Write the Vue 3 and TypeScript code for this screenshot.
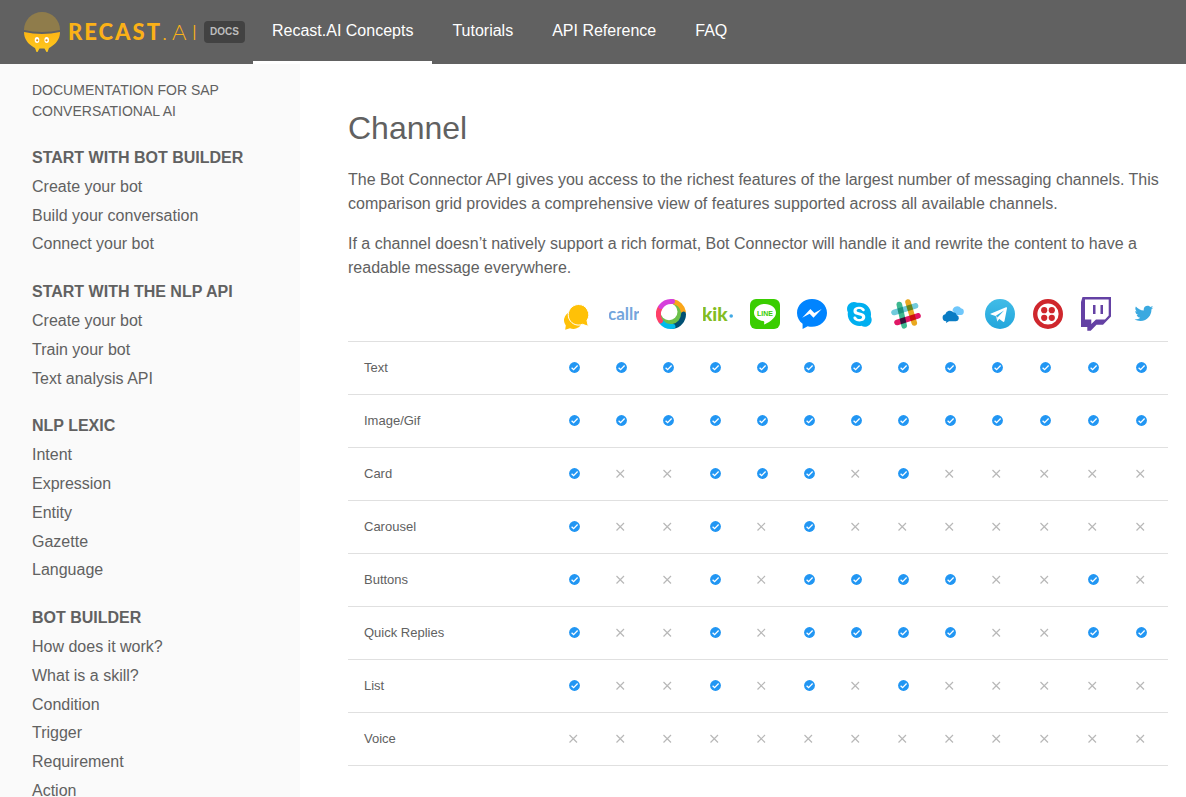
<script setup lang="ts">
interface Group {
  title: string
  items: string[]
}

interface Feature {
  name: string
  support: string
}

const tabs: string[] = ['Recast.AI Concepts', 'Tutorials', 'API Reference', 'FAQ']

const groups: Group[] = [
  { title: 'START WITH BOT BUILDER', items: ['Create your bot', 'Build your conversation', 'Connect your bot'] },
  { title: 'START WITH THE NLP API', items: ['Create your bot', 'Train your bot', 'Text analysis API'] },
  { title: 'NLP LEXIC', items: ['Intent', 'Expression', 'Entity', 'Gazette', 'Language'] },
  {
    title: 'BOT BUILDER',
    items: ['How does it work?', 'What is a skill?', 'Condition', 'Trigger', 'Requirement', 'Action'],
  },
]

// One character per channel: 1 = supported, 0 = not supported
const features: Feature[] = [
  { name: 'Text', support: '1111111111111' },
  { name: 'Image/Gif', support: '1111111111111' },
  { name: 'Card', support: '1001110100000' },
  { name: 'Carousel', support: '1001010000000' },
  { name: 'Buttons', support: '1001011110010' },
  { name: 'Quick Replies', support: '1001011110011' },
  { name: 'List', support: '1001010100000' },
  { name: 'Voice', support: '0000000000000' },
]
</script>

<template>
  <div class="page">
    <header class="topbar">
      <a class="brand" href="#">
        <svg class="robot" viewBox="0 0 36 40" aria-hidden="true">
          <defs>
            <linearGradient id="face" x1="0" y1="0" x2="0" y2="1">
              <stop offset="0" stop-color="#fcb514" />
              <stop offset="1" stop-color="#ffc91f" />
            </linearGradient>
          </defs>
          <path d="M0 18C0 8 8 0 18 0S36 8 36 18Q28 20 18 20T0 18Z" fill="#8f7c4b" />
          <path d="M0 20Q9 22 18 22T36 20C36 27 32 32 26 35.500L25 36L23.500 40H22.500L20.500 36.500H15.500L13.500 40H12.500L11 36L10 35.500C4 32 0 27 0 20Z" fill="url(#face)" />
          <ellipse cx="13" cy="28" rx="2.300" ry="3" fill="#fff" />
          <ellipse cx="22.700" cy="28" rx="2.300" ry="3" fill="#fff" />
          <circle cx="13.200" cy="28.300" r="1.100" fill="#d98a18" />
          <circle cx="22.500" cy="28.300" r="1.100" fill="#d98a18" />
        </svg>
        <span class="wordmark">RECAST<span class="thin">.AI</span></span>
        <span class="badge">DOCS</span>
      </a>
      <nav class="tabs">
        <a v-for="(tab, i) in tabs" :key="tab" href="#" :class="['tab', { active: i === 0 }]">{{ tab }}</a>
      </nav>
    </header>

    <div class="body">
      <aside class="sidebar">
        <p class="intro">DOCUMENTATION FOR SAP CONVERSATIONAL AI</p>
        <section v-for="group in groups" :key="group.title" class="group">
          <h2>{{ group.title }}</h2>
          <ul>
            <li v-for="item in group.items" :key="item"><a href="#">{{ item }}</a></li>
          </ul>
        </section>
      </aside>

      <main class="content">
        <h1>Channel</h1>
        <p>
          The Bot Connector API gives you access to the richest features of the largest number of messaging
          channels. This comparison grid provides a comprehensive view of features supported across all available
          channels.
        </p>
        <p>
          If a channel doesn’t natively support a rich format, Bot Connector will handle it and rewrite the content
          to have a readable message everywhere.
        </p>

        <table>
          <colgroup>
            <col />
            <col class="channel" span="9" />
            <col class="channel wide" span="3" />
            <col class="channel" />
          </colgroup>
          <thead>
            <tr>
              <td></td>
              <th scope="col">
                <svg viewBox="0 0 30 36" role="img" aria-label="Webchat">
                  <path d="M11 15.500A8.800 8.800 0 0 0 3.800 29.500L3.200 33.800L8 32.200A9 8.800 0 0 0 19.500 28Z" fill="#ffc107" />
                  <path d="M16.300 8.500A10.300 10.300 0 0 1 25 24.500L26.300 30.300L20.500 28.300A10.300 10.300 0 1 1 16.300 8.500Z" fill="#ffc107" stroke="#fff" stroke-width="1" />
                </svg>
              </th>
              <th scope="col">
                <svg viewBox="0 0 30 36" role="img" aria-label="Callr">
                  <text x="-1" y="24" class="callr">callr</text>
                </svg>
              </th>
              <th scope="col">
                <svg viewBox="0 0 30 36" role="img" aria-label="Webex Teams">
                  <circle cx="15" cy="18" r="11" fill="#6cc04a" />
                  <circle cx="13" cy="15.800" r="8.500" fill="#fff" />
                  <g fill="none" stroke-width="5" stroke-linecap="round">
                    <path d="M17 5.600A12.500 12.500 0 0 1 27.300 15.500" stroke="#faa61a" />
                    <path d="M27.500 18A12.500 12.500 0 0 1 17 30.400" stroke="#005073" />
                    <path d="M17 30.400A12.500 12.500 0 0 1 5.500 26.200" stroke="#00bceb" />
                    <path d="M4.500 24.800A12.500 12.500 0 0 1 4 12" stroke="#ff4068" />
                    <path d="M5 10.500A12.500 12.500 0 0 1 16.500 5.500" stroke="#d63fdb" />
                  </g>
                </svg>
              </th>
              <th scope="col">
                <svg viewBox="0 0 30 36" role="img" aria-label="Kik">
                  <text x="-1" y="25" class="kik">kik</text>
                  <circle cx="28.200" cy="20" r="1.800" fill="#42a9e4" />
                </svg>
              </th>
              <th scope="col">
                <svg viewBox="0 0 30 36" role="img" aria-label="Line">
                  <rect y="3" width="30" height="30" rx="6" fill="#3acd01" />
                  <path d="M15 8C9 8 4 11.800 4 16.700C4 21 8 24.400 13.200 25C14.600 25.300 14.300 26.300 14 28.500C17 27.500 26 22.500 26 16.700C26 11.800 21 8 15 8Z" fill="#fff" />
                  <text x="15" y="19.500" text-anchor="middle" class="line">LINE</text>
                </svg>
              </th>
              <th scope="col">
                <svg viewBox="0 0 30 36" role="img" aria-label="Messenger">
                  <path transform="translate(0 3) scale(1.250)" fill="#0084ff" d="M12 0C5.373 0 0 4.974 0 11.111c0 3.498 1.744 6.614 4.469 8.654V24l4.088-2.242c1.092.3 2.246.464 3.443.464 6.627 0 12-4.975 12-11.110S18.627 0 12 0zm1.191 14.963l-3.055-3.260-5.963 3.260L10.732 8l3.131 3.259L19.752 8l-6.561 6.963z" />
                </svg>
              </th>
              <th scope="col">
                <svg viewBox="0 0 30 36" role="img" aria-label="Skype">
                  <path transform="translate(3 6) scale(1.030)" fill="#00aff0" d="M12.069 18.874c-4.023 0-5.820-1.979-5.820-3.464 0-.765.561-1.296 1.333-1.296 1.723 0 1.273 2.477 4.487 2.477 1.641 0 2.550-.895 2.550-1.811 0-.551-.269-1.160-1.354-1.429l-3.576-.895c-2.880-.724-3.403-2.286-3.403-3.751 0-3.047 2.861-4.191 5.549-4.191 2.471 0 5.393 1.373 5.393 3.199 0 .784-.688 1.240-1.453 1.240-1.469 0-1.198-2.037-4.164-2.037-1.469 0-2.292.664-2.292 1.617s1.153 1.258 2.157 1.487l2.637.587c2.891.649 3.624 2.346 3.624 3.944 0 2.476-1.902 4.324-5.722 4.324M23.320 12.007c0-1.529-.301-3.012-.898-4.420-.569-1.348-1.395-2.562-2.427-3.596-1.049-1.033-2.247-1.856-3.595-2.426-1.318-.631-2.801-.930-4.328-.930-.720 0-1.444.070-2.143.204C8.910.274 7.829 0 6.731 0c-1.789 0-3.470.698-4.736 1.967C.729 3.235.032 4.923.032 6.716c0 1.143.292 2.265.844 3.258-.114.645-.172 1.299-.172 1.955 0 1.530.300 3.017.884 4.416.568 1.362 1.378 2.576 2.427 3.609 1.034 1.050 2.247 1.857 3.595 2.442 1.394.600 2.877.898 4.404.898.659 0 1.334-.060 1.977-.179 1.002.569 2.126.871 3.294.871 1.783 0 3.459-.690 4.733-1.963 1.259-1.259 1.962-2.951 1.962-4.749 0-1.138-.299-2.262-.853-3.266.120-.675.193-1.332.193-2.001z" fill-rule="evenodd" />
                </svg>
              </th>
              <th scope="col">
                <svg viewBox="0 0 30 36" role="img" aria-label="Slack" class="slack">
                  <g fill="none" stroke-width="5.600" stroke-linecap="round">
                    <path d="M8.300 8.500L13.200 29.800" stroke="#3eb890" />
                    <path d="M17 6L23.300 27" stroke="#e9a820" />
                    <path class="over" d="M3 16.500L24.500 9.800" stroke="#70cadb" />
                    <path class="over" d="M6 26.500L27 19.800" stroke="#e01765" />
                  </g>
                </svg>
              </th>
              <th scope="col">
                <svg viewBox="0 0 30 36" role="img" aria-label="SAP Cloud">
                  <path d="M14.500 14.500A4.700 4.700 0 0 1 23 12.300A3.400 3.400 0 0 1 23 19H18Z" fill="#6fc7fb" />
                  <path d="M8.300 25.200A3.500 3.500 0 0 1 7.300 18.300A4.800 4.800 0 0 1 15.500 16.300A3.600 3.600 0 0 1 18.700 19A3.200 3.200 0 0 1 18 25.200H11L8 27Z" fill="#0a7cc4" />
                </svg>
              </th>
              <th scope="col">
                <svg viewBox="0 0 30 36" role="img" aria-label="Telegram">
                  <defs>
                    <linearGradient id="tg" x1="0" y1="0" x2="0" y2="1">
                      <stop offset="0" stop-color="#41bce7" />
                      <stop offset="1" stop-color="#22a6dc" />
                    </linearGradient>
                  </defs>
                  <circle cx="15" cy="18" r="15" fill="url(#tg)" />
                  <path d="M10.500 19.500L12.300 25.500L14.500 22.500Z" fill="#c3dcea" />
                  <path d="M5.500 17.800L21 11.200Q22.300 10.900 22 12.300L19.500 25Q19 26.500 17.700 25.600L14 22.800L12.300 25.500L12.500 21.500L19 14.500L10.500 20L6 18.500Q4.900 18.100 5.500 17.800Z" fill="#fff" />
                </svg>
              </th>
              <th scope="col">
                <svg viewBox="0 0 30 36" role="img" aria-label="Twilio">
                  <circle cx="15" cy="18" r="12.800" fill="#fff" stroke="#cf272d" stroke-width="4.400" />
                  <g fill="#cf272d">
                    <circle cx="11.200" cy="14.200" r="3.100" />
                    <circle cx="18.800" cy="14.200" r="3.100" />
                    <circle cx="11.200" cy="21.800" r="3.100" />
                    <circle cx="18.800" cy="21.800" r="3.100" />
                  </g>
                </svg>
              </th>
              <th scope="col">
                <svg viewBox="0 0 30 36" role="img" aria-label="Twitch">
                  <path d="M1.500 1H30V20.500L22 28.700H15.500L9.700 34.700H6.300V31H0V6Z" fill="#6441a4" />
                  <path d="M4 3.500H27.700V19.500L24 23.500H15L10.300 28V23.500H4Z" fill="#fff" />
                  <path d="M12 9H14.500V18H12ZM19.500 9H22V18H19.500Z" fill="#6441a4" />
                </svg>
              </th>
              <th scope="col">
                <svg viewBox="0 0 30 36" role="img" aria-label="Twitter">
                  <path transform="translate(5.600 8) scale(.780)" fill="#3aa9e0" d="M23.954 4.569c-.885.389-1.830.654-2.825.775 1.014-.611 1.794-1.574 2.163-2.723-.951.555-2.005.959-3.127 1.184-.896-.959-2.173-1.559-3.591-1.559-2.717 0-4.920 2.203-4.920 4.917 0 .390.045.765.127 1.124C7.691 8.094 4.066 6.130 1.640 3.161c-.427.722-.666 1.561-.666 2.475 0 1.710.870 3.213 2.188 4.096-.807-.026-1.566-.248-2.228-.616v.061c0 2.385 1.693 4.374 3.946 4.827-.413.111-.849.171-1.296.171-.314 0-.615-.030-.916-.086.631 1.953 2.445 3.377 4.604 3.417-1.680 1.319-3.809 2.105-6.102 2.105-.390 0-.779-.023-1.170-.067 2.189 1.394 4.768 2.209 7.557 2.209 9.054 0 13.999-7.496 13.999-13.986 0-.209 0-.420-.015-.630.961-.689 1.800-1.560 2.460-2.548l-.047-.020z" />
                </svg>
              </th>
            </tr>
          </thead>
          <tbody>
            <tr v-for="feature in features" :key="feature.name">
              <th scope="row">{{ feature.name }}</th>
              <td v-for="(flag, i) in feature.support" :key="i">
                <svg v-if="flag === '1'" class="mark" viewBox="0 0 11 11" role="img" aria-label="Supported">
                  <circle cx="5.500" cy="5.500" r="5.400" fill="#2196f3" />
                  <path d="M2.600 5.700L4.600 7.600L8.600 3.500" fill="none" stroke="#fff" stroke-width="1.300" />
                </svg>
                <svg v-else class="mark" viewBox="0 0 11 11" role="img" aria-label="Not supported">
                  <path d="M.5 2L8 9.500M8 2L.5 9.500" fill="none" stroke="#b8b8b8" stroke-width="1.200" />
                </svg>
              </td>
            </tr>
          </tbody>
        </table>
      </main>
    </div>
  </div>
</template>

<style>
body {
  margin: 0;
  background: #fff;
}
</style>

<style scoped>
.page {
  display: flex;
  flex-direction: column;
  height: 100vh;
  font-family: "Liberation Sans", Arial, sans-serif;
  font-size: 16px;
  color: #616161;
}

a {
  color: inherit;
  text-decoration: none;
}

.topbar {
  display: flex;
  flex: none;
  height: 64px;
  background: #616161;
}

.brand {
  display: flex;
  align-items: center;
  flex: none;
  box-sizing: border-box;
  width: 253px;
  padding: 0 8px 0 24px;
}

.robot {
  flex: none;
  width: 36px;
  height: 40px;
}

.wordmark {
  flex: 1;
  margin-left: 8px;
  font-family: Lato, sans-serif;
  font-size: 22px;
  font-weight: 900;
  letter-spacing: 2px;
  line-height: 24px;
  color: #fbb117;
}

.thin {
  font-weight: 300;
  letter-spacing: 5px;
}

.badge {
  padding: 0 6px;
  border-radius: 4px;
  background: #424242;
  color: #bdbdbd;
  font-size: 10px;
  font-weight: 700;
  line-height: 22px;
}

.tabs {
  display: flex;
  gap: 1px;
}

.tab {
  padding: 0 19px;
  border-bottom: 3px solid transparent;
  line-height: 61px;
  color: #fff;
  white-space: nowrap;
}

.tab.active {
  border-bottom-color: #fff;
}

.body {
  display: flex;
  flex: 1;
  min-height: 0;
}

.sidebar {
  flex: none;
  box-sizing: border-box;
  width: 300px;
  padding: 16px 32px 0;
  background: #fafafa;
  overflow-y: auto;
  scrollbar-width: none;
}

.intro {
  margin: 0 0 22px;
  font-size: 14px;
  line-height: 21px;
}

.group {
  margin-bottom: 19px;
  line-height: 1.8;
}

.group h2 {
  margin: 0;
  font-size: 16px;
  font-weight: 700;
}

.group ul {
  margin: 0;
  padding: 0;
  list-style: none;
}

.content {
  flex: 1;
  min-width: 0;
  padding: 44px 18px 0 48px;
  overflow-y: auto;
  scrollbar-width: none;
}

h1 {
  margin: 0 0 20px;
  font-size: 32px;
  font-weight: 400;
  line-height: 40px;
}

.content p {
  margin: 0 0 16px;
  line-height: 24px;
}

table {
  width: 100%;
  table-layout: fixed;
  border-collapse: separate;
  border-spacing: 0;
}

.channel {
  width: 47px;
}

.wide {
  width: 48px;
}

th,
td {
  padding: 0;
  border-bottom: 1px solid #e0e0e0;
  text-align: left;
}

thead th {
  padding: 0 0 9px 8px;
}

thead svg {
  display: block;
  width: 30px;
  height: 36px;
}

tbody th {
  height: 50px;
  padding: 0 0 2px 16px;
  font-size: 13px;
  font-weight: 400;
}

tbody td {
  padding: 0 0 2px 15px;
}

.mark {
  display: block;
  width: 11px;
  height: 11px;
}

.slack {
  isolation: isolate;
}

.over {
  mix-blend-mode: multiply;
}

.callr {
  font-family: Lato, sans-serif;
  font-size: 17px;
  font-weight: 700;
  fill: #74a5dc;
}

.kik {
  font-family: Lato, sans-serif;
  font-size: 19px;
  font-weight: 900;
  fill: #82bc23;
}

.line {
  font-family: "Liberation Sans", Arial, sans-serif;
  font-size: 7px;
  font-weight: 700;
  fill: #3acd01;
}
</style>
